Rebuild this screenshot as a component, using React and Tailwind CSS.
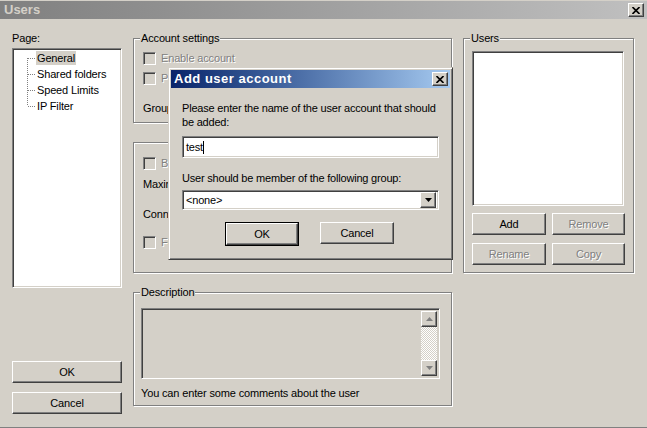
import React from 'react'

const raised =
  'border border-t-white border-l-white border-r-[#404040] border-b-[#404040] shadow-[inset_-1px_-1px_0_#808080] bg-[#d4d0c8]'
const sunken =
  'border border-t-[#808080] border-l-[#808080] border-r-white border-b-white shadow-[inset_1px_1px_0_#404040,inset_-1px_-1px_0_#d4d0c8]'
const dim = 'text-[#808080] [text-shadow:1px_1px_0_#fff]'

function GroupBox({ label, className = '', children }) {
  return (
    <div className={`relative border border-[#808080] shadow-[inset_1px_1px_0_#fff,1px_1px_0_#fff] ${className}`}>
      {label ? (
        <span className="absolute -top-[8px] left-[6px] bg-[#d4d0c8] px-px leading-[14px]">{label}</span>
      ) : null}
      {children}
    </div>
  )
}

function Button({ children, disabled, className = '' }) {
  return (
    <div className={`${raised} flex h-[22px] items-center justify-center ${disabled ? dim : ''} ${className}`}>
      {children}
    </div>
  )
}

function Check({ label, disabled }) {
  return (
    <div className="flex h-[15px] items-center gap-[5px] whitespace-nowrap">
      <span className={`${sunken} h-[13px] w-[13px] shrink-0 bg-[#d4d0c8]`} />
      <span className={disabled ? dim : ''}>{label}</span>
    </div>
  )
}

function CloseBtn() {
  return (
    <div className={`${raised} flex h-[14px] w-[16px] items-center justify-center`}>
      <svg width="8" height="7" viewBox="0 0 8 7">
        <path d="M0.5 0 L7.5 7 M7.5 0 L0.5 7" stroke="#000" strokeWidth="1.6" />
      </svg>
    </div>
  )
}

function Arrow({ up, color = '#000' }) {
  return (
    <svg width="7" height="4" viewBox="0 0 7 4">
      <path d={up ? 'M3.5 0 L7 4 L0 4 Z' : 'M0 0 L7 0 L3.5 4 Z'} fill={color} />
    </svg>
  )
}

export default function App() {
  return (
    <div className="relative h-[428px] w-[647px] overflow-hidden border-b border-[#808080] bg-[#d4d0c8] font-['Liberation_Sans',Arial,sans-serif] text-[11px] tracking-[-0.15px] text-black">
      {/* title bar */}
      <div className="mt-px flex h-[18px] items-center justify-between bg-gradient-to-r from-[#808080] to-[#c0c0c0] pl-[4px] pr-[3px]">
        <span className="text-[13px] font-bold tracking-normal text-[#d4d0c8]">Users</span>
        <CloseBtn />
      </div>

      <div className="flex pl-[12px] pt-[11px]">
        {/* left column */}
        <div className="flex w-[110px] flex-col">
          <div className="h-[16px] leading-[16px]">Page:</div>
          <div className={`${sunken} relative mt-[2px] h-[240px] bg-white p-px`}>
            <svg className="absolute left-[1px] top-[1px]" width="24" height="70">
              <path
                d="M13.5 8 V56 M14 8.5 H22 M14 24.5 H22 M14 40.5 H22 M14 56.5 H22"
                stroke="#808080"
                strokeWidth="1"
                strokeDasharray="1 1"
                fill="none"
              />
            </svg>
            <div className="flex flex-col pl-[22px]">
              {['General', 'Shared folders', 'Speed Limits', 'IP Filter'].map((t, i) => (
                <div key={t} className="flex h-[16px] items-center">
                  <span className={`px-[1px] leading-[14px] ${i === 0 ? 'bg-[#d4d0c8]' : ''}`}>{t}</span>
                </div>
              ))}
            </div>
          </div>
          <Button className="mt-[73px]">OK</Button>
          <Button className="mt-[9px]">Cancel</Button>
        </div>

        {/* middle column */}
        <div className="ml-[11px] mt-[8px] flex w-[319px] flex-col">
          <GroupBox label="Account settings" className="h-[85px]">
            <div className="flex flex-col pl-[9px] pt-[12px]">
              <Check label="Enable account" disabled />
              <div className="mt-[2px] flex h-[21px] items-center">
                <Check label="P" disabled />
                <div className={`${sunken} ml-auto mr-[49px] h-[21px] w-[156px] bg-[#d4d0c8]`} />
              </div>
              <div className="mt-[11px] h-[16px] leading-[16px]">Group</div>
            </div>
          </GroupBox>

          <GroupBox className="mt-[19px] h-[131px]">
            <div className="flex flex-col pl-[9px] pt-[13px]">
              <Check label="By" disabled />
              <div className="mt-[5px] h-[16px] leading-[16px]">Maxim</div>
              <div className="mt-[14px] h-[16px] leading-[16px]">Conne</div>
              <div className="mt-[13px]">
                <Check label="Fo" disabled />
              </div>
            </div>
          </GroupBox>

          <GroupBox label="Description" className="mt-[19px] h-[114px]">
            <div className="flex flex-col pl-[7px] pt-[15px]">
              <div className={`${sunken} flex h-[71px] w-[299px] justify-end bg-[#d4d0c8] p-[2px]`}>
                <div className="flex w-[16px] flex-col">
                  <div className={`${raised} flex h-[16px] items-center justify-center`}>
                    <Arrow up color="#808080" />
                  </div>
                  <div className="flex-1 bg-[repeating-conic-gradient(#fff_0%_25%,#d4d0c8_0%_50%)] [background-size:2px_2px]" />
                  <div className={`${raised} flex h-[16px] items-center justify-center`}>
                    <Arrow color="#808080" />
                  </div>
                </div>
              </div>
              <div className="mt-[6px] h-[16px] leading-[16px]">You can enter some comments about the user</div>
            </div>
          </GroupBox>
        </div>

        {/* right column */}
        <div className="ml-[11px] mt-[8px] w-[171px]">
          <GroupBox label="Users" className="h-[235px]">
            <div className="flex flex-col pl-[8px] pt-[12px]">
              <div className={`${sunken} h-[155px] w-[152px] bg-white`} />
              <div className="mt-[7px] flex gap-[6px]">
                <Button className="w-[74px]">Add</Button>
                <Button className="w-[73px]" disabled>Remove</Button>
              </div>
              <div className="mt-[8px] flex gap-[6px]">
                <Button className="w-[74px]" disabled>Rename</Button>
                <Button className="w-[73px]" disabled>Copy</Button>
              </div>
            </div>
          </GroupBox>
        </div>
      </div>

      {/* Add user account dialog */}
      <div className="absolute left-[168px] top-[67px] flex h-[193px] w-[285px] flex-col border border-t-[#d4d0c8] border-l-[#d4d0c8] border-r-[#404040] border-b-[#404040] bg-[#d4d0c8] p-[2px] shadow-[inset_1px_1px_0_#fff,inset_-1px_-1px_0_#808080]">
        <div className="flex h-[18px] items-center justify-between bg-gradient-to-r from-[#0a246a] to-[#a6caf0] pl-[3px] pr-[2px]">
          <span className="text-[13px] font-bold tracking-[0.5px] text-white">Add user account</span>
          <CloseBtn />
        </div>
        <div className="flex flex-col px-[11px] tracking-[-0.2px]">
          <div className="mt-[13px] leading-[14px]">
            Please enter the name of the user account that should
            <br />
            be added:
          </div>
          <div className={`${sunken} mt-[7px] flex h-[22px] w-[257px] items-center bg-white pl-[3px]`}>
            <span>test</span>
            <span className="h-[13px] w-px bg-black" />
          </div>
          <div className="mt-[13px] leading-[14px]">User should be member of the following group:</div>
          <div className={`${sunken} mt-[5px] flex h-[20px] w-[257px] items-center justify-between bg-white p-[2px] pl-[3px]`}>
            <span>&lt;none&gt;</span>
            <div className={`${raised} flex h-[16px] w-[16px] items-center justify-center`}>
              <Arrow />
            </div>
          </div>
          <div className="mt-[12px] ml-[43px] flex gap-[21px]">
            <div className="w-[74px] border border-black">
              <Button className="h-[20px]">OK</Button>
            </div>
            <Button className="w-[74px]">Cancel</Button>
          </div>
        </div>
      </div>
    </div>
  )
}
